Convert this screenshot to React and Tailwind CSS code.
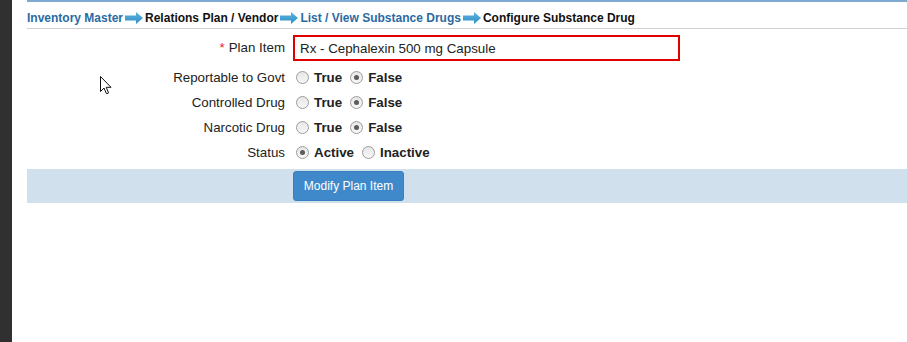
import React, { useState } from 'react';

const font = { fontFamily: '"Liberation Sans", Arial, sans-serif' };

function Arrow() {
  return (
    <svg width="18" height="14" viewBox="0 0 18 14" className="mx-[2px] shrink-0">
      <defs>
        <linearGradient id="arw" x1="0" y1="0" x2="0" y2="1">
          <stop offset="0" stopColor="#5db3de" />
          <stop offset="1" stopColor="#2f8fc6" />
        </linearGradient>
      </defs>
      <path d="M0 4.5 H11 V1 L18 7 L11 13 V9.5 H0 Z" fill="url(#arw)" />
    </svg>
  );
}

function Radio({ checked, onClick }) {
  return (
    <span
      onClick={onClick}
      className="ml-[4px] mr-[5px] inline-flex h-[13px] w-[13px] shrink-0 cursor-default items-center justify-center rounded-full border border-[#9c9c9c] bg-gradient-to-b from-[#e6e6e6] to-[#f8f8f8]"
    >
      {checked && <span className="h-[5px] w-[5px] rounded-full bg-[#5c5c5c]" />}
    </span>
  );
}

function RadioRow({ label, options, value, onChange }) {
  return (
    <div className="flex h-[25px] items-center">
      <div className="w-[259px] pr-[1px] text-right text-[13.33px] text-[#222]">{label}</div>
      <div className="ml-[6px] flex items-center">
        {options.map((opt) => (
          <label key={opt} className="mr-[4px] flex items-center text-[13.33px] font-bold text-[#222]">
            <Radio checked={value === opt} onClick={() => onChange(opt)} />
            {opt}
          </label>
        ))}
      </div>
    </div>
  );
}

export default function App() {
  const [reportable, setReportable] = useState('False');
  const [controlled, setControlled] = useState('False');
  const [narcotic, setNarcotic] = useState('False');
  const [status, setStatus] = useState('Active');
  const [planItem, setPlanItem] = useState('Rx - Cephalexin 500 mg Capsule');

  return (
    <div className="relative flex h-[342px] w-full overflow-hidden bg-white" style={font}>
      <div className="w-[12px] shrink-0 bg-[#303030]" />
      <div className="flex-1 pl-[15px]">
        <div className="h-[2px] border-b-2 border-l-2 border-[#7ea9d1]" />

        {/* breadcrumb */}
        <div className="flex h-[27px] items-center border-b border-[#cfcfcf] pt-[9px] pb-[3px] text-[12px] font-bold">
          <span className="text-[#2a6aa3]">Inventory Master</span>
          <Arrow />
          <span className="text-[#111]">Relations Plan / Vendor</span>
          <Arrow />
          <span className="text-[#2a6aa3]">List / View Substance Drugs</span>
          <Arrow />
          <span className="text-[#111]">Configure Substance Drug</span>
        </div>

        {/* form */}
        <div className="pt-[6px]">
          <div className="flex h-[26px] items-center">
            <div className="w-[259px] pr-[1px] text-right text-[13.33px] text-[#222]">
              <span className="mr-[4px] text-[#e21b1b]">*</span>Plan Item
            </div>
            <input
              value={planItem}
              onChange={(e) => setPlanItem(e.target.value)}
              className="ml-[7px] h-[26px] w-[387px] border-2 border-[#e00000] px-[5px] text-[13.33px] text-[#222] outline-none"
              style={font}
            />
          </div>
          <div className="pt-[4px]">
            <RadioRow label="Reportable to Govt" options={['True', 'False']} value={reportable} onChange={setReportable} />
            <RadioRow label="Controlled Drug" options={['True', 'False']} value={controlled} onChange={setControlled} />
            <RadioRow label="Narcotic Drug" options={['True', 'False']} value={narcotic} onChange={setNarcotic} />
            <RadioRow label="Status" options={['Active', 'Inactive']} value={status} onChange={setStatus} />
          </div>
        </div>

        {/* action bar */}
        <div className="mt-[4px] flex h-[34px] items-start bg-[#d0e0ed] pt-[2px] pl-[266px]">
          <button
            className="h-[30px] w-[111px] rounded-[3px] border border-[#3a7fbd] bg-[#3f89ca] text-[12px] text-white"
            style={font}
          >
            Modify Plan Item
          </button>
        </div>
      </div>

      {/* mouse pointer */}
      <svg className="absolute left-[100px] top-[76px]" width="12" height="19" viewBox="0 0 12 19">
        <path d="M0.5 0.5 V15.5 L4 12 L6.5 17.8 L8.6 16.9 L6.2 11.3 H11 Z" fill="#fff" stroke="#111" strokeWidth="1" />
      </svg>
    </div>
  );
}
